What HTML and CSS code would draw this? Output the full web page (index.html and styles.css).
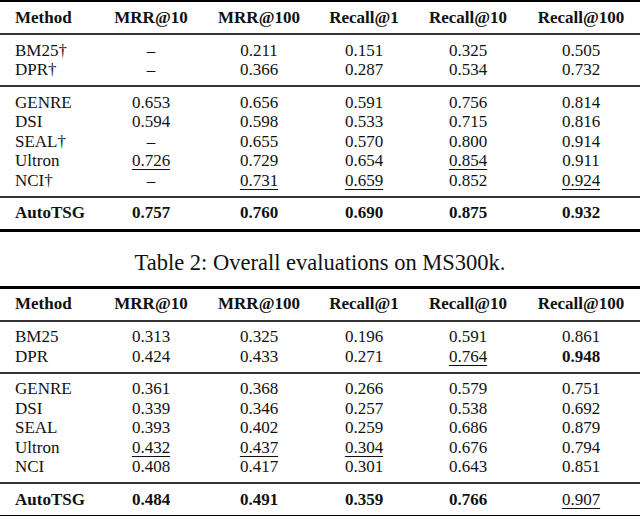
FILE: index.html
```html
<!DOCTYPE html>
<html>
<head>
<meta charset="utf-8">
<link rel="stylesheet" href="styles.css">
</head>
<body>
<table class="res t1">
  <colgroup>
    <col class="c1"><col class="c2"><col class="c3"><col class="c4"><col class="c5"><col class="c6">
  </colgroup>
  <thead>
    <tr><th class="m">Method</th><th>MRR@10</th><th>MRR@100</th><th>Recall@1</th><th>Recall@10</th><th>Recall@100</th></tr>
  </thead>
  <tbody>
    <tr class="first"><td class="m">BM25†</td><td>–</td><td>0.211</td><td>0.151</td><td>0.325</td><td>0.505</td></tr>
    <tr class="last"><td class="m">DPR†</td><td>–</td><td>0.366</td><td>0.287</td><td>0.534</td><td>0.732</td></tr>
    <tr class="first"><td class="m">GENRE</td><td>0.653</td><td>0.656</td><td>0.591</td><td>0.756</td><td>0.814</td></tr>
    <tr><td class="m">DSI</td><td>0.594</td><td>0.598</td><td>0.533</td><td>0.715</td><td>0.816</td></tr>
    <tr><td class="m">SEAL†</td><td>–</td><td>0.655</td><td>0.570</td><td>0.800</td><td>0.914</td></tr>
    <tr><td class="m">Ultron</td><td><span class="u">0.726</span></td><td>0.729</td><td>0.654</td><td><span class="u">0.854</span></td><td>0.911</td></tr>
    <tr class="last"><td class="m">NCI†</td><td>–</td><td><span class="u">0.731</span></td><td><span class="u">0.659</span></td><td>0.852</td><td><span class="u">0.924</span></td></tr>
  </tbody>
  <tfoot>
    <tr class="best"><td class="m">AutoTSG</td><td>0.757</td><td>0.760</td><td>0.690</td><td>0.875</td><td>0.932</td></tr>
  </tfoot>
</table>

<div class="caption">Table 2: Overall evaluations on MS300k.</div>

<table class="res t2">
  <colgroup>
    <col class="c1"><col class="c2"><col class="c3"><col class="c4"><col class="c5"><col class="c6">
  </colgroup>
  <thead>
    <tr><th class="m">Method</th><th>MRR@10</th><th>MRR@100</th><th>Recall@1</th><th>Recall@10</th><th>Recall@100</th></tr>
  </thead>
  <tbody>
    <tr class="first"><td class="m">BM25</td><td>0.313</td><td>0.325</td><td>0.196</td><td>0.591</td><td>0.861</td></tr>
    <tr class="last"><td class="m">DPR</td><td>0.424</td><td>0.433</td><td>0.271</td><td><span class="u">0.764</span></td><td><b>0.948</b></td></tr>
    <tr class="first"><td class="m">GENRE</td><td>0.361</td><td>0.368</td><td>0.266</td><td>0.579</td><td>0.751</td></tr>
    <tr><td class="m">DSI</td><td>0.339</td><td>0.346</td><td>0.257</td><td>0.538</td><td>0.692</td></tr>
    <tr><td class="m">SEAL</td><td>0.393</td><td>0.402</td><td>0.259</td><td>0.686</td><td>0.879</td></tr>
    <tr><td class="m">Ultron</td><td><span class="u">0.432</span></td><td><span class="u">0.437</span></td><td><span class="u">0.304</span></td><td>0.676</td><td>0.794</td></tr>
    <tr class="last"><td class="m">NCI</td><td>0.408</td><td>0.417</td><td>0.301</td><td>0.643</td><td>0.851</td></tr>
  </tbody>
  <tfoot>
    <tr class="best"><td class="m">AutoTSG</td><td>0.484</td><td>0.491</td><td>0.359</td><td>0.766</td><td><span class="u nb">0.907</span></td></tr>
  </tfoot>
</table>
</body>
</html>
```

FILE: styles.css
```css
html, body {
  margin: 0;
  padding: 0;
  background: #ffffff;
}
body {
  width: 640px;
  font-family: "Liberation Serif", "Times New Roman", serif;
  font-size: 17px;
  color: #111111;
}
.res {
  width: 640px;
  border-collapse: separate;
  border-spacing: 0;
  table-layout: fixed;
}
.c1 { width: 98px; }
.c2 { width: 106px; }
.c3 { width: 110px; }
.c4 { width: 100px; }
.c5 { width: 108px; }
.c6 { width: 118px; }

.res th, .res td {
  padding: 0;
  text-align: center;
  vertical-align: middle;
  line-height: 19.5px;
  white-space: nowrap;
}
.res .m {
  text-align: left;
  padding-left: 15px;
}
.res th {
  font-weight: bold;
  height: 31px;
  border-bottom: 2px solid #333333;
}
.t1 th { border-top: 2px solid #000000; }
.t2 th { border-top: 3px solid #000000; }

.res tr.first td { padding-top: 5.5px; }
.res tr.last td {
  padding-bottom: 5.5px;
  border-bottom: 2px solid #333333;
}
.res tr.best td {
  font-weight: bold;
  height: 31px;
  padding: 0;
  border-bottom: 3px solid #000000;
}
.res tr.best td.m { padding-left: 15px; }
.nb { font-weight: normal; }

.u {
  text-decoration: underline;
  text-decoration-thickness: 1px;
  text-underline-offset: 3px;
}

.caption {
  text-align: center;
  font-size: 22.5px;
  line-height: 24px;
  padding-top: 19px;
  padding-bottom: 11px;
}
```
